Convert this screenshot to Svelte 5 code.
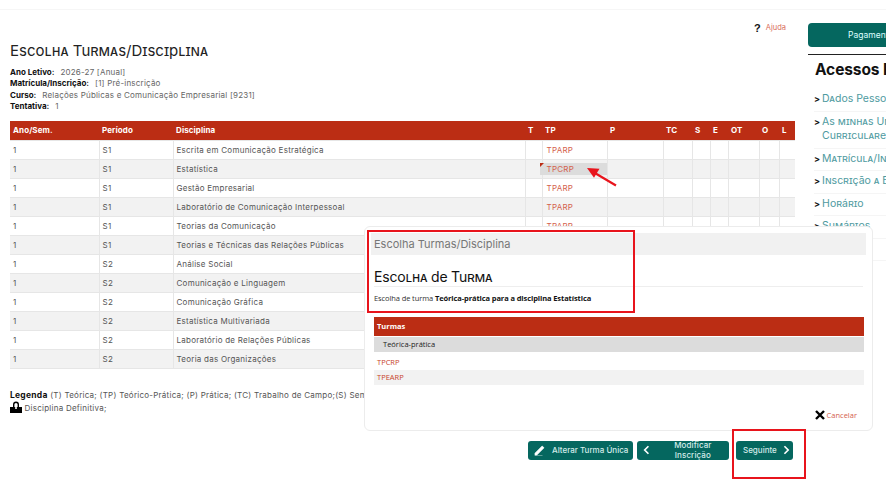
<script>
  const cols = [89, 74, 352, 17, 65, 56, 29, 18, 18, 31, 20, 16];
  const heads = ['Ano/Sem.', 'Período', 'Disciplina', 'T', 'TP', 'P', 'TC', 'S', 'E', 'OT', 'O', 'L'];
  const rows = [
    ['S1', 'Escrita em Comunicação Estratégica', 'TPARP'],
    ['S1', 'Estatística', 'TPCRP'],
    ['S1', 'Gestão Empresarial', 'TPARP'],
    ['S1', 'Laboratório de Comunicação Interpessoal', 'TPARP'],
    ['S1', 'Teorias da Comunicação', 'TPARP'],
    ['S1', 'Teorias e Técnicas das Relações Públicas', 'TPARP'],
    ['S2', 'Análise Social', 'TPARP'],
    ['S2', 'Comunicação e Linguagem', 'TPARP'],
    ['S2', 'Comunicação Gráfica', 'TPARP'],
    ['S2', 'Estatística Multivariada', 'TPARP'],
    ['S2', 'Laboratório de Relações Públicas', 'TPARP'],
    ['S2', 'Teoria das Organizações', 'TPARP']
  ];
  const links = [['Dados Pessoais'], ['As minhas Unidades', 'Curriculares'], ['Matrícula/Inscrição'], ['Inscrição a Exames'], ['Horário'], ['Sumários'], ['Dívidas']];
</script>

<div class="page">
  <main class="main">
    <div class="help"><span class="q">?</span><a href="#a">Ajuda</a></div>
    <h1>Escolha Turmas/Disciplina</h1>
    <dl class="meta">
      <div><dt>Ano Letivo:</dt><dd>2026-27 [Anual]</dd></div>
      <div><dt>Matrícula/Inscrição:</dt><dd>[1] Pré-inscrição</dd></div>
      <div><dt>Curso:</dt><dd>Relações Públicas e Comunicação Empresarial [9231]</dd></div>
      <div><dt>Tentativa:</dt><dd>1</dd></div>
    </dl>
    <table class="grid">
      <colgroup>{#each cols as c}<col style="width:{c}px" />{/each}</colgroup>
      <thead><tr>{#each heads as h}<th>{h}</th>{/each}</tr></thead>
      <tbody>
        {#each rows as r, i}
          <tr>
            <td>1</td><td>{r[0]}</td><td class="disc">{r[1]}</td><td></td>
            <td class="tp"><span class:sel={i === 1}>{r[2]}</span></td>
            <td></td><td></td><td></td><td></td><td></td><td></td><td></td>
          </tr>
        {/each}
      </tbody>
    </table>
    <p class="legend"><b>Legenda</b> (T) Teórica; (TP) Teórico-Prática; (P) Prática; (TC) Trabalho de Campo;(S) Seminário; (E) Estágio;<br />
      <svg class="lock" viewBox="0 0 12 12" width="12" height="12"><path d="M3 6V3.6a3 3 0 0 1 6 0V6H7.6V3.6a1.6 1.6 0 0 0-3.2 0V6z" fill="#000"/><path d="M0 6h5.2v2h1.6V6H12v6H0z" fill="#000"/></svg>
      Disciplina Definitiva;</p>
    <div class="actions">
      <button><svg viewBox="0 0 12 12" width="12" height="12"><path d="M1 9.2 8.2 2l1.8 1.8L2.8 11H1zM.5 12h8" fill="#fff" stroke="#fff" stroke-width=".7"/></svg>Alterar Turma Única</button>
      <button class="m"><svg viewBox="0 0 8 12" width="7" height="10"><path d="M6.5 1.5 2 6l4.500 4.500" fill="none" stroke="#fff" stroke-width="2"/></svg>Modificar Inscrição</button>
      <button class="s">Seguinte<svg viewBox="0 0 8 12" width="7" height="10"><path d="M1.500 1.500 6 6l-4.500 4.500" fill="none" stroke="#fff" stroke-width="2"/></svg></button>
    </div>
  </main>

  <aside class="side">
    <div class="pay">Pagamentos</div>
    <h2>Acessos Rápidos</h2>
    <ul>
      {#each links as l}
        <li><span class="chev">&gt;</span><span>{#each l as t, i}{#if i}<br />{/if}{t}{/each}</span></li>
      {/each}
    </ul>
  </aside>

  <section class="modal">
    <div class="mhead">Escolha Turmas/Disciplina</div>
    <h3>Escolha de Turma</h3>
    <p class="choice">Escolha de turma <b>Teórica-prática para a disciplina Estatística</b></p>
    <div class="mtable">
      <div class="mred">Turmas</div>
      <div class="mgray">Teórica-prática</div>
      <div class="mrow">TPCRP</div>
      <div class="mrow alt">TPEARP</div>
    </div>
    <div class="cancel">
      <svg viewBox="0 0 10 10" width="10" height="10"><path d="M1 1 9 9M9 1 1 9" stroke="#000" stroke-width="2.400"/></svg>
      <a href="#c">Cancelar</a>
    </div>
  </section>

  <div class="mark r1"></div>
  <div class="mark r2"></div>
  <svg class="arrow" viewBox="0 0 32 20" width="32" height="20"><path d="M30 18.500 8 5.500" stroke="#e8141c" stroke-width="2.200"/><path d="M1 1l12.500.800-5.500 9z" fill="#e8141c"/></svg>
</div>

<style>
  :global(body) { margin: 0; overflow: hidden; background: #fff; }
  .page { position: relative; width: 886px; height: 479px; overflow: hidden; display: flex; font-family: Inter, "Noto Sans", sans-serif; font-size: 8px; color: #555; box-sizing: border-box; }
  .page::before { content: ""; position: absolute; left: 0; right: 0; top: 9px; height: 1px; background: #f6f6f6; }
  .main { flex: none; width: 785px; margin-left: 10px; padding-top: 23px; }
  .help { display: flex; justify-content: flex-end; align-items: flex-start; height: 16px; padding-right: 9px; gap: 5px; }
  .q { font: bold 11px/11px "Liberation Sans", sans-serif; color: #111; }
  .help a { color: #d96f5c; text-decoration: none; font-size: 7.500px; line-height: 9px; }
  h1 { margin: 3px 0 0; font-size: 15px; line-height: 18px; font-weight: 400; font-variant: small-caps; color: #222; }
  .meta { margin: 7px 0 0; line-height: 11.400px; }
  .meta div { display: flex; gap: 6px; height: 11.400px; }
  dt { font-weight: 700; color: #111; }
  dd { margin: 0; color: #666; letter-spacing: .2px; }
  .grid { margin-top: 8px; border-collapse: collapse; table-layout: fixed; width: 785px; }
  th { background: #bb2d14; color: #fff; height: 19px; padding: 0 3px; text-align: left; font-size: 8px; font-weight: 700; letter-spacing: .1px; }
  td { height: 19px; padding: 0 3px; border: 1px solid #e6e6e6; box-sizing: border-box; color: #555; letter-spacing: .25px; }
  td:first-child { border-left: 0; }
  td:last-child { border-right: 0; }
  tbody tr:nth-child(even) td { background: #f2f2f2; }
  .disc { padding-left: 3px; }
  .tp { position: relative; color: #d4614d; padding-left: 4px; }
  .sel { position: absolute; left: -3px; right: 0; top: 3px; height: 12px; line-height: 12px; padding-left: 7px; background: #dcdcdc; }
  .sel::before { content: ""; position: absolute; left: 0; top: 0; border-top: 4px solid #bb2d14; border-right: 4px solid transparent; }
  .legend { margin: 21px 0 0; line-height: 11.500px; color: #555; letter-spacing: .25px; }
  .legend b { color: #111; font-size: 8.500px; }
  .lock { vertical-align: -2px; }
  .actions { display: flex; justify-content: flex-end; margin-top: 26px; padding-right: 2px; gap: 4px; }
  button { display: flex; align-items: center; height: 19px; padding: 0 0 0 6px; border: 0; border-radius: 3px; background: #05675f; color: #d4ecea; font: 500 8px Inter, sans-serif; gap: 6px; width: 105px; }
  button.m { width: 92px; gap: 7px; letter-spacing: .1px; margin-right: 3px; }
  button.s { width: 57px; justify-content: space-between; padding: 0 3px 0 7px; }
  .side { flex: none; width: 130px; margin-left: 13px; padding-top: 23px; }
  .pay { height: 24px; line-height: 24px; border-radius: 4px; background: #05675f; color: #dff; text-align: center; font-size: 8.500px; }
  h2 { margin: 7px 0 0; border-top: 1.500px solid #222; padding: 6px 0 0 7px; font-size: 15.500px; line-height: 18px; font-weight: 700; font-variant: small-caps; color: #111; letter-spacing: -.1px; white-space: nowrap; }
  ul { list-style: none; margin: 10px 0 0 6px; padding: 0; }
  li { display: flex; gap: 2px; padding: 3px 0 4px; line-height: 14.500px; min-height: 12px; font-variant: small-caps; font-size: 10.500px; color: #4e9aa0; border-bottom: 1px solid #f5f5f5; white-space: nowrap; }
  .chev { color: #111; font-weight: 700; font-size: 9px; }
  .modal { position: absolute; left: 364px; top: 226px; width: 509px; height: 205px; box-sizing: border-box; padding: 6px 6px 0; border: 1px solid #ececec; border-radius: 6px; background: #fff; font-family: "Open Sans", sans-serif; }
  .mhead { height: 22px; line-height: 22px; padding-left: 3px; background: #f1f1f1; color: #777; font: 11px/22px Inter, sans-serif; }
  h3 { margin: 13px 3px 0; height: 18px; line-height: 18px; font-size: 14px; font-weight: 400; font-variant: small-caps; color: #111; border-bottom: 1px solid #eee; font-family: Inter, sans-serif; letter-spacing: -.2px; }
  .choice { margin: 6px 3px 0; font-size: 7.500px; line-height: 11px; color: #333; letter-spacing: -.1px; }
  .choice b { color: #111; }
  .mtable { margin: 13px 3px 0; width: 490px; font-size: 7.500px; }
  .mred { height: 19px; line-height: 19px; padding-left: 3px; background: #bb2d14; color: #fff; font-weight: 700; }
  .mgray { height: 15px; line-height: 15px; margin-top: 1px; padding-left: 9px; background: #dcdcdc; color: #222; }
  .mrow { height: 15px; line-height: 15px; padding-left: 3px; color: #c8442c; }
  .mrow:nth-child(3) { margin-top: 3px; }
  .alt { background: #f2f2f2; }
  .cancel { position: absolute; right: 15px; top: 183px; display: flex; align-items: center; gap: 2px; }
  .cancel a { color: #d4614d; text-decoration: none; font-size: 7.500px; }
  .mark { position: absolute; border: 2.500px solid #e8141c; box-sizing: border-box; }
  .r1 { left: 367px; top: 230px; width: 268px; height: 83px; }
  .r2 { left: 732px; top: 429px; width: 74px; height: 50px; }
  .arrow { position: absolute; left: 586px; top: 167px; }
</style>
